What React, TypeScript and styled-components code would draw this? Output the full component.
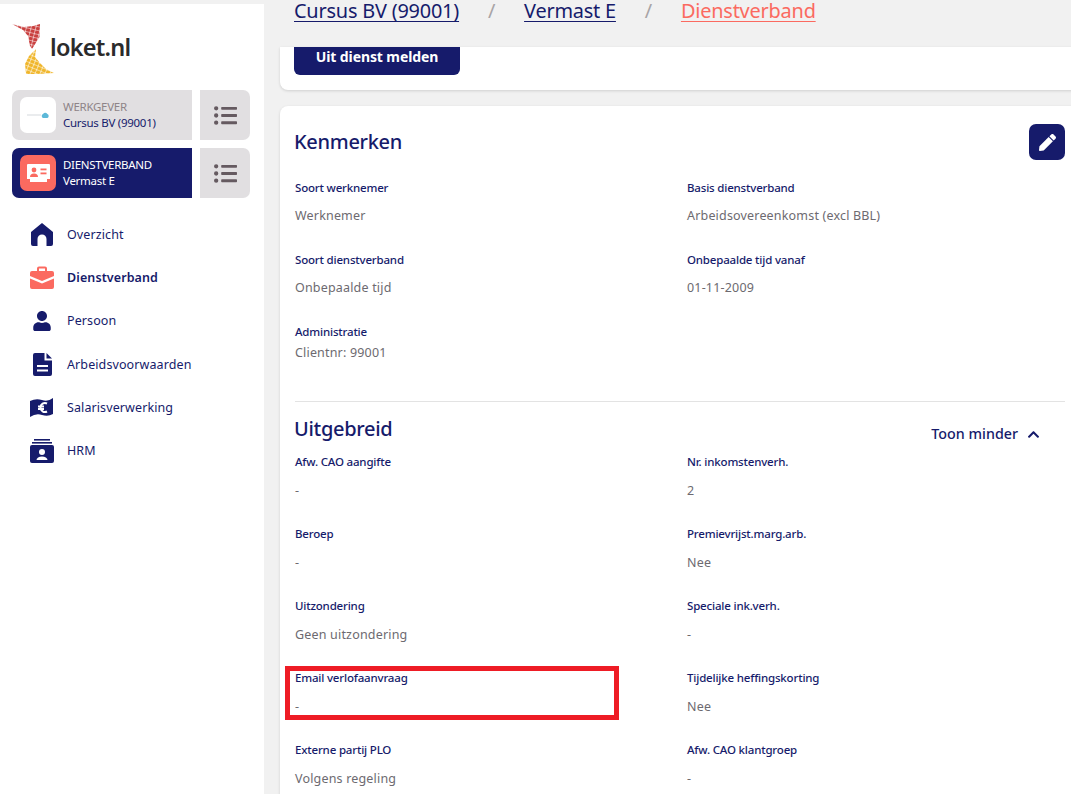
import React from 'react';
import styled, { createGlobalStyle } from 'styled-components';
import { FaListUl, FaPen, FaChevronUp, FaUser } from 'react-icons/fa';

const NAVY = '#161b6b';
const CORAL = '#fb6a60';
const FONT = '"Noto Sans", "Open Sans", sans-serif';

const GlobalStyle = createGlobalStyle`
  html, body {
    margin: 0;
    height: 100%;
    background: #f1f1f1;
    font-family: ${FONT};
    overflow: hidden;
  }
`;

const Page = styled.div`
  display: grid;
  grid-template-columns: 264px 1fr;
  width: 1071px;
  height: 794px;
  overflow: hidden;
`;

const Sidebar = styled.aside`
  margin-top: 4px;
  background: #fff;
  padding: 18px 14px 0 12px;
`;

const LogoRow = styled.div`
  display: flex;
  align-items: flex-start;
  height: 68px;
`;

const LogoText = styled.span`
  margin: 10px 0 0 -4px;
  font-size: 23.5px;
  font-weight: 600;
  letter-spacing: -0.75px;
  line-height: 30px;
  color: #2b2b2b;
`;

const ContextRow = styled.div`
  display: grid;
  grid-template-columns: 180px 50px;
  gap: 8px;
  height: 50px;
  margin-bottom: 8px;
`;

const ContextCard = styled.div<{ $active?: boolean }>`
  display: flex;
  align-items: center;
  gap: 7px;
  padding-left: 8px;
  border-radius: 7px 0 0 7px;
  background: ${(p) => (p.$active ? NAVY : '#e1dfe1')};
`;

const ContextIcon = styled.div<{ $active?: boolean }>`
  display: flex;
  align-items: center;
  justify-content: center;
  width: 36px;
  height: 36px;
  border-radius: 7px;
  background: ${(p) => (p.$active ? CORAL : '#fff')};
`;

const ContextText = styled.div<{ $active?: boolean }>`
  font-size: 11.5px;
  line-height: 16px;
  letter-spacing: -0.28px;
  color: ${(p) => (p.$active ? '#fff' : NAVY)};
`;

const ContextKind = styled.div<{ $active?: boolean }>`
  color: ${(p) => (p.$active ? '#fff' : '#8e8488')};
`;

const ListButton = styled.div`
  display: flex;
  align-items: center;
  justify-content: center;
  border-radius: 0 7px 7px 0;
  background: #e1dfe1;
  color: #655a60;
  font-size: 23px;
`;

const Nav = styled.nav`
  display: flex;
  flex-direction: column;
  gap: 15px;
  padding: 14px 0 0 18px;
`;

const NavItem = styled.div<{ $active?: boolean }>`
  display: flex;
  align-items: center;
  gap: 13px;
  height: 28.3px;
  font-size: 12.5px;
  letter-spacing: 0.1px;
  font-weight: ${(p) => (p.$active ? 600 : 400)};
  color: ${NAVY};
`;

const NavIcon = styled.span`
  display: flex;
  align-items: center;
  justify-content: center;
  width: 24px;
  height: 24px;
  font-size: 22px;
`;

const Main = styled.main`
  min-width: 0;
  padding-left: 16px;
`;

const Crumbs = styled.header`
  display: flex;
  align-items: flex-start;
  height: 47px;
  padding-left: 14px;
  font-size: 19.9px;
  line-height: 22px;
  letter-spacing: -0.2px;
`;

const Crumb = styled.a<{ $current?: boolean }>`
  color: ${(p) => (p.$current ? CORAL : NAVY)};
  text-decoration: underline;
  text-underline-offset: 3px;
`;

const CrumbSlash = styled.span`
  width: 65px;
  text-align: center;
  color: #a8a4a6;
`;

const Card = styled.section<{ $flatTop?: boolean }>`
  width: 800px;
  box-sizing: border-box;
  background: #fff;
  border-radius: ${(p) => (p.$flatTop ? '0 0 8px 8px' : '8px')};
  box-shadow: 0 1px 3px rgba(0, 0, 0, 0.14);
`;

const ActionCard = styled(Card)`
  height: 43px;
  margin-bottom: 16px;
  padding-left: 14px;
`;

const PrimaryButton = styled.button`
  display: block;
  width: 166px;
  height: 28px;
  padding: 0 0 10px;
  border: 0;
  border-radius: 0 0 6px 6px;
  background: ${NAVY};
  color: #fff;
  font-family: ${FONT};
  font-size: 14px;
  font-weight: 700;
  letter-spacing: -0.1px;
`;

const DetailCard = styled(Card)`
  padding: 18px 15px 0 15px;
`;

const TitleRow = styled.div<{ $gap: number }>`
  display: flex;
  justify-content: space-between;
  align-items: flex-start;
  margin-bottom: ${(p) => p.$gap}px;
`;

const SectionTitle = styled.h2<{ $top: number }>`
  margin: ${(p) => p.$top}px 0 0 -1px;
  font-size: 20px;
  line-height: 28px;
  font-weight: 500;
  letter-spacing: -0.3px;
  color: ${NAVY};
`;

const EditButton = styled.button`
  display: flex;
  align-items: center;
  justify-content: center;
  width: 36px;
  height: 36px;
  padding: 0;
  border: 0;
  border-radius: 7px;
  background: ${NAVY};
  color: #fff;
  font-size: 17px;
`;

const FieldGrid = styled.div`
  display: grid;
  grid-template-columns: 392px 1fr;
`;

const Field = styled.div`
  height: 72px;
`;

const MarkedField = styled(Field)`
  position: relative;
`;

const FieldLabel = styled.div`
  font-size: 11.5px;
  line-height: 16px;
  font-weight: 500;
  letter-spacing: -0.18px;
  color: ${NAVY};
`;

const FieldValue = styled.div<{ $gap: number }>`
  margin-top: ${(p) => p.$gap}px;
  font-size: 12.5px;
  line-height: 16px;
  letter-spacing: 0.18px;
  color: #6d6a70;
`;

const Divider = styled.hr`
  margin: 5px 0 0;
  border: 0;
  border-top: 1px solid #e3e3e3;
`;

const Toggle = styled.div`
  display: flex;
  align-items: center;
  gap: 9px;
  margin: 22px 25px 0 0;
  font-size: 14.3px;
  line-height: 20px;
  font-weight: 500;
  color: ${NAVY};
`;

// the red marker sits on top of the page, it was drawn over the screenshot
const Highlight = styled.div`
  position: absolute;
  left: -10px;
  top: -4px;
  width: 334px;
  height: 54px;
  box-sizing: border-box;
  border: 5px solid #ee1c25;
  pointer-events: none;
`;

const LogoMark = () => (
  <svg width="42" height="54" viewBox="12 20 42 54" aria-hidden="true">
    <defs>
      <pattern id="redTiles" width="4.6" height="3.8" patternUnits="userSpaceOnUse" patternTransform="rotate(14)">
        <rect width="4.1" height="3.3" rx="0.5" fill="#c9403f" />
      </pattern>
      <pattern id="yellowTiles" width="4.6" height="3.8" patternUnits="userSpaceOnUse" patternTransform="rotate(22)">
        <rect width="4.1" height="3.3" rx="0.5" fill="#f0b62b" />
      </pattern>
    </defs>
    <path fill="url(#redTiles)" d="M12 22 L24 25 L33 24 L40 22 L39.5 35 L32 47 L30 44 L28 34 L23 28 Z" />
    <path fill="url(#yellowTiles)" d="M36 47 L35 55 L40 61 L46 67 L54 71 L38 72 L26 72 L25 62 L29 54 Z" />
  </svg>
);

const HomeIcon = () => (
  <svg width="24" height="23" viewBox="0 0 24 23" aria-hidden="true">
    <path
      fill={NAVY}
      d="M12 0 L23 9 V21 a2 2 0 0 1-2 2 H16.5 V16 a4.5 4.5 0 0 0-9 0 V23 H3 a2 2 0 0 1-2-2 V9 Z"
    />
  </svg>
);

const BriefcaseIcon = () => (
  <svg width="24" height="23" viewBox="0 0 24 23" aria-hidden="true">
    <path
      fill={CORAL}
      d="M7 5 V2.5 A2 2 0 0 1 9 .5 H15 A2 2 0 0 1 17 2.5 V5 H22 A2 2 0 0 1 24 7 V10 L12 15 L0 10 V7 A2 2 0 0 1 2 5 Z M9 5 H15 V2.5 H9 Z M0 12.5 L12 17.5 L24 12.5 V21 A2 2 0 0 1 22 23 H2 A2 2 0 0 1 0 21 Z"
      fillRule="evenodd"
    />
  </svg>
);

const DocumentIcon = () => (
  <svg width="19" height="23" viewBox="0 0 19 23" aria-hidden="true">
    <path fill={NAVY} d="M2 0 H11.5 V7.5 H19 V21 a2 2 0 0 1-2 2 H2 a2 2 0 0 1-2-2 V2 a2 2 0 0 1 2-2 Z" />
    <path fill={NAVY} d="M13.5 0 L19 5.5 H13.5 Z" />
    <rect x="4" y="12" width="11" height="2" fill="#fff" />
    <rect x="4" y="16.5" width="11" height="2" fill="#fff" />
  </svg>
);

const EuroNoteIcon = () => (
  <svg width="24" height="19" viewBox="0 0 24 19" aria-hidden="true">
    <path fill={NAVY} d="M0 3 Q6 0 12 2 T23 0 V16 Q18 19 12 17 T0 19 Z" />
    <path
      fill="none"
      stroke="#fff"
      strokeWidth="2"
      d="M17 5.5 A4.5 4.5 0 1 0 17 13.5 M8 8.5 H14 M8 11 H14"
    />
  </svg>
);

const HrmIcon = () => (
  <svg width="24" height="24" viewBox="0 0 24 24" aria-hidden="true">
    <rect x="4" y="0" width="16" height="1.6" fill={NAVY} />
    <rect x="2" y="3" width="20" height="1.6" fill={NAVY} />
    <path fill={NAVY} d="M2 6 H22 A2 2 0 0 1 24 8 V22 A2 2 0 0 1 22 24 H2 A2 2 0 0 1 0 22 V8 A2 2 0 0 1 2 6 Z" />
    <circle cx="12" cy="13" r="3" fill="#fff" />
    <path fill="#fff" d="M6.5 21 a5.5 3.5 0 0 1 11 0 Z" />
  </svg>
);

const PersonIcon = styled(FaUser)`
  color: ${NAVY};
  font-size: 20px;
`;

const CompanyMark = () => (
  <svg width="22" height="8" viewBox="0 0 22 8" aria-hidden="true">
    <rect x="0" y="3.5" width="14" height="1" fill="#d5dadd" />
    <path fill="#5cb8d8" d="M16 7 a2.2 2.2 0 0 1 0-4 a3 3 0 0 1 4.4 0 a2.2 2.2 0 0 1 0 4 Z" />
  </svg>
);

const ContractIcon = () => (
  <svg width="23" height="18" viewBox="0 0 23 18" aria-hidden="true">
    <path fill="#fff" d="M1 0 H22 a1 1 0 0 1 1 1 V15 H20 V18 H3 V15 H0 V1 a1 1 0 0 1 1-1 Z" />
    <circle cx="7" cy="6" r="2.4" fill={CORAL} />
    <path fill={CORAL} d="M3 13 a4 3.5 0 0 1 8 0 Z" />
    <rect x="13.5" y="4.5" width="6" height="1.8" fill={CORAL} />
    <rect x="13.5" y="8.5" width="6" height="1.8" fill={CORAL} />
  </svg>
);

const kenmerken: [string, string][] = [
  ['Soort werknemer', 'Werknemer'],
  ['Basis dienstverband', 'Arbeidsovereenkomst (excl BBL)'],
  ['Soort dienstverband', 'Onbepaalde tijd'],
  ['Onbepaalde tijd vanaf', '01-11-2009'],
];

const uitgebreid: [string, string][] = [
  ['Afw. CAO aangifte', '-'],
  ['Nr. inkomstenverh.', '2'],
  ['Beroep', '-'],
  ['Premievrijst.marg.arb.', 'Nee'],
  ['Uitzondering', 'Geen uitzondering'],
  ['Speciale ink.verh.', '-'],
  ['Email verlofaanvraag', '-'],
  ['Tijdelijke heffingskorting', 'Nee'],
  ['Externe partij PLO', 'Volgens regeling'],
  ['Afw. CAO klantgroep', '-'],
];

const navItems = [
  { label: 'Overzicht', icon: <HomeIcon /> },
  { label: 'Dienstverband', icon: <BriefcaseIcon />, active: true },
  { label: 'Persoon', icon: <PersonIcon /> },
  { label: 'Arbeidsvoorwaarden', icon: <DocumentIcon /> },
  { label: 'Salarisverwerking', icon: <EuroNoteIcon /> },
  { label: 'HRM', icon: <HrmIcon /> },
];

function App() {
  return (
    <Page>
      <GlobalStyle />
      <Sidebar>
        <LogoRow>
          <LogoMark />
          <LogoText>loket.nl</LogoText>
        </LogoRow>
        <ContextRow>
          <ContextCard>
            <ContextIcon>
              <CompanyMark />
            </ContextIcon>
            <ContextText>
              <ContextKind>WERKGEVER</ContextKind>
              Cursus BV (99001)
            </ContextText>
          </ContextCard>
          <ListButton>
            <FaListUl />
          </ListButton>
        </ContextRow>
        <ContextRow>
          <ContextCard $active>
            <ContextIcon $active>
              <ContractIcon />
            </ContextIcon>
            <ContextText $active>
              <ContextKind $active>DIENSTVERBAND</ContextKind>
              Vermast E
            </ContextText>
          </ContextCard>
          <ListButton>
            <FaListUl />
          </ListButton>
        </ContextRow>
        <Nav>
          {navItems.map((item) => (
            <NavItem key={item.label} $active={item.active}>
              <NavIcon>{item.icon}</NavIcon>
              {item.label}
            </NavItem>
          ))}
        </Nav>
      </Sidebar>
      <Main>
        <Crumbs>
          <Crumb>Cursus BV (99001)</Crumb>
          <CrumbSlash>/</CrumbSlash>
          <Crumb>Vermast E</Crumb>
          <CrumbSlash>/</CrumbSlash>
          <Crumb $current>Dienstverband</Crumb>
        </Crumbs>
        <ActionCard $flatTop>
          <PrimaryButton>Uit dienst melden</PrimaryButton>
        </ActionCard>
        <DetailCard>
          <TitleRow $gap={20}>
            <SectionTitle $top={4}>Kenmerken</SectionTitle>
            <EditButton aria-label="Bewerken">
              <FaPen />
            </EditButton>
          </TitleRow>
          <FieldGrid>
            {kenmerken.map(([label, value]) => (
              <Field key={label}>
                <FieldLabel>{label}</FieldLabel>
                <FieldValue $gap={12}>{value}</FieldValue>
              </Field>
            ))}
            <Field>
              <FieldLabel>Administratie</FieldLabel>
              <FieldValue $gap={5}>Clientnr: 99001</FieldValue>
            </Field>
          </FieldGrid>
          <Divider />
          <TitleRow $gap={10}>
            <SectionTitle $top={13}>Uitgebreid</SectionTitle>
            <Toggle>
              Toon minder
              <FaChevronUp size={13} />
            </Toggle>
          </TitleRow>
          <FieldGrid>
            {uitgebreid.map(([label, value]) =>
              label === 'Email verlofaanvraag' ? (
                <MarkedField key={label}>
                  <Highlight />
                  <FieldLabel>{label}</FieldLabel>
                  <FieldValue $gap={13}>{value}</FieldValue>
                </MarkedField>
              ) : (
                <Field key={label}>
                  <FieldLabel>{label}</FieldLabel>
                  <FieldValue $gap={13}>{value}</FieldValue>
                </Field>
              ),
            )}
          </FieldGrid>
        </DetailCard>
      </Main>
    </Page>
  );
}

export default App;
